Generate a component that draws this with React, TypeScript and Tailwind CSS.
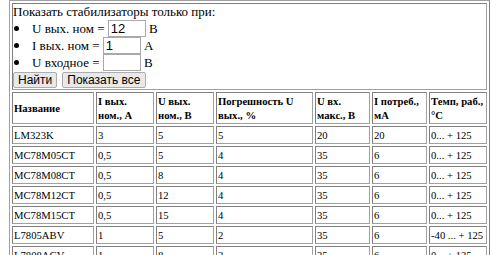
import React from "react";

const rows = [
  ["LM323K", "3", "5", "5", "20", "20", "0... + 125"],
  ["MC78M05CT", "0,5", "5", "4", "35", "6", "0... + 125"],
  ["MC78M08CT", "0,5", "8", "4", "35", "6", "0... + 125"],
  ["MC78M12CT", "0,5", "12", "4", "35", "6", "0... + 125"],
  ["MC78M15CT", "0,5", "15", "4", "35", "6", "0... + 125"],
  ["L7805ABV", "1", "5", "2", "35", "6", "-40 ... + 125"],
  ["L7808ACV", "1", "8", "2", "35", "6", "0... + 125"],
  ["L7812ACV", "1", "12", "2", "35", "6", "0... + 125"],
];

const Field = ({ label, value, unit }: { label: string; value: string; unit: string }) => (
  <div className="flex h-[17px] items-center">
    <span className="flex w-[19px] pl-[1px]">
      <span className="h-[5px] w-[5px] rounded-full bg-black"></span>
    </span>
    <span>{label}&nbsp;</span>
    <input
      className="h-[17px] w-[38px] border border-[#a9a9a9] bg-white px-[2px] font-['Liberation_Sans',sans-serif] text-[13px] leading-[15px] text-black outline-none"
      defaultValue={value}
    />
    <span>&nbsp;{unit}</span>
  </div>
);

const cell = "border border-[#a0a0a0] border-t-[#808080] border-l-[#808080] px-px py-px text-left align-middle";

const App = () => {
  return (
    <div className="h-[255px] overflow-hidden bg-white font-['Liberation_Serif',serif] text-black">
      <div className="ml-[9px] w-[481px] border border-[#a0a0a0] border-b-[#808080] border-r-[#808080]">
        <div className="mx-[2px] mt-[2px] border border-[#a0a0a0] border-t-[#808080] border-l-[#808080] text-[13px] leading-[16px]">
          <div>Показать стабилизаторы только при:</div>
          <Field label="U вых. ном =" value="12" unit="В" />
          <Field label="I вых. ном =" value="1" unit="А" />
          <Field label="U входное =" value="" unit="В" />
          <div className="flex h-[18px] items-center gap-[5px]">
            <button className="h-[16px] rounded-[2px] border border-[#adadad] bg-[#e9e9e9] px-[4px] font-['Liberation_Sans',sans-serif] text-[12px] leading-[14px]">
              Найти
            </button>
            <button className="h-[16px] rounded-[2px] border border-[#adadad] bg-[#e9e9e9] px-[4px] font-['Liberation_Sans',sans-serif] text-[12px] leading-[14px]">
              Показать все
            </button>
          </div>
        </div>
        <table className="w-[479px] table-fixed border-separate border-spacing-[2px] text-[10.67px] leading-[14px]">
          <thead>
            <tr>
              <th className={`${cell} w-[82px] font-bold`}>Название</th>
              <th className={`${cell} w-[58px] font-bold`}>I вых.<br />ном., А</th>
              <th className={`${cell} w-[58px] font-bold`}>U вых.<br />ном., В</th>
              <th className={`${cell} w-[97px] font-bold`}>Погрешность U<br />вых., %</th>
              <th className={`${cell} w-[55px] font-bold`}>U вх.<br />макс., В</th>
              <th className={`${cell} w-[55px] font-bold`}>I потреб.,<br />мА</th>
              <th className={`${cell} w-[58px] font-bold`}>Темп, раб.,<br />°C</th>
            </tr>
          </thead>
          <tbody>
            {rows.map((r) => (
              <tr key={r[0]}>
                {r.map((v, i) => (
                  <td key={i} className={`${cell} whitespace-nowrap`}>
                    {v}
                  </td>
                ))}
              </tr>
            ))}
          </tbody>
        </table>
      </div>
    </div>
  );
};

export default App;
